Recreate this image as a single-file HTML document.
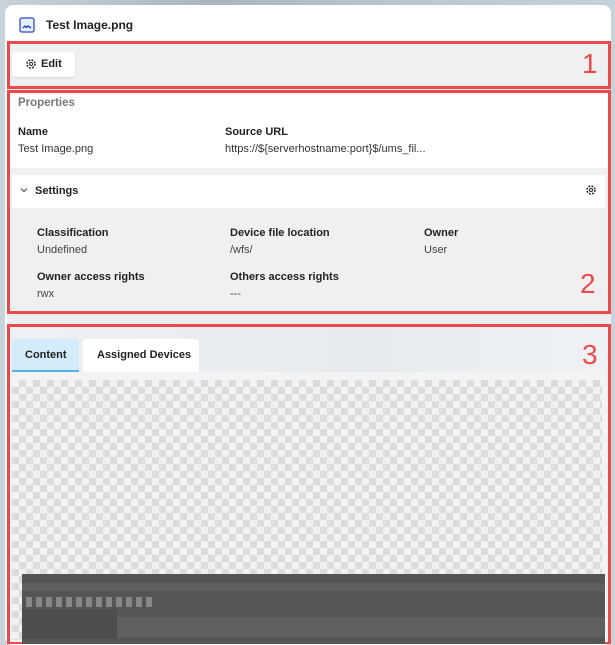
<!DOCTYPE html><html><head><style>
*{box-sizing:border-box;margin:0;padding:0}
body{width:615px;height:636px;overflow:hidden;background:#c9d3da;font-family:"Liberation Sans",sans-serif;position:relative;color:#222}
.a{position:absolute}
.card{left:5px;top:5px;width:606px;height:640px;background:#fff;border-radius:8px}
.rb{border:3px solid #ec4a4a}
.t{font-size:11px;white-space:nowrap}
.b{font-weight:bold;font-size:11px;color:#222;white-space:nowrap}
.num{color:#ec4a4a;font-size:28px;line-height:28px}
.chk{background-color:#f2f2f2;background-image:linear-gradient(45deg,#dcdcdc 25%,transparent 25%,transparent 75%,#dcdcdc 75%),linear-gradient(45deg,#dcdcdc 25%,transparent 25%,transparent 75%,#dcdcdc 75%);background-size:14px 14px;background-position:0 0,7px 7px}
</style></head><body>
<div class="a" style="left:0;top:0;width:615px;height:8px;background:linear-gradient(90deg,#c8d2d8 0,#a9b6bf 35%,#b8c4cc 60%,#c4d2dc 100%)"></div>
<div class="a card"></div>
<svg class="a" style="left:19px;top:17px" width="16" height="16" viewBox="0 0 16 16"><rect x="1" y="1" width="14" height="14" rx="2" fill="#e9eefc" stroke="#4a63d6" stroke-width="1.5"/><path d="M4 11l2-2 1.5 1.5L9 9l3 2" fill="none" stroke="#2d4bc8" stroke-width="1.5"/></svg>
<div class="a b" style="left:46px;top:18px;font-size:12px">Test Image.png</div>

<div class="a" style="left:7px;top:41px;width:604px;height:283px;background:#eceeef"></div>
<div class="a rb" style="left:7px;top:41px;width:604px;height:48px;background:#f0f0f0"></div>
<div class="a" style="left:12px;top:52px;width:63px;height:25px;background:#fff;border-radius:3px;box-shadow:0 1px 2px rgba(0,0,0,.1)"></div>
<svg class="a" style="left:25px;top:58px" width="12" height="12" viewBox="0 0 12 12"><circle cx="6" cy="6" r="4" fill="none" stroke="#333" stroke-width="1.6" stroke-dasharray="2 1.2"/><circle cx="6" cy="6" r="1.6" fill="none" stroke="#333" stroke-width="1.1"/></svg>
<div class="a b" style="left:41px;top:58px">Edit</div>
<div class="a num" style="left:582px;top:50px">1</div>

<div class="a rb" style="left:7px;top:90px;width:604px;height:224px;background:#f0f0f0"></div>
<div class="a" style="left:10px;top:93px;width:598px;height:75px;background:#fff"></div>
<div class="a b" style="left:18px;top:97px;color:#777;font-size:11.5px">Properties</div>
<div class="a b" style="left:18px;top:126px">Name</div>
<div class="a t" style="left:18px;top:143px;color:#333">Test Image.png</div>
<div class="a b" style="left:225px;top:126px">Source URL</div>
<div class="a t" style="left:225px;top:143px;color:#333">https://${serverhostname:port}$/ums_fil...</div>
<div class="a" style="left:12px;top:175px;width:593px;height:33px;background:#fff"></div>
<svg class="a" style="left:20px;top:187px" width="8" height="6" viewBox="0 0 8 6"><path d="M1 1.5l3 3 3-3" fill="none" stroke="#555" stroke-width="1.2"/></svg>
<div class="a b" style="left:35px;top:185px">Settings</div>
<svg class="a" style="left:585px;top:184px" width="12" height="12" viewBox="0 0 12 12"><circle cx="6" cy="6" r="4" fill="none" stroke="#333" stroke-width="1.6" stroke-dasharray="2 1.2"/><circle cx="6" cy="6" r="1.6" fill="none" stroke="#333" stroke-width="1.1"/></svg>
<div class="a b" style="left:37px;top:227px">Classification</div>
<div class="a t" style="left:37px;top:244px;color:#444">Undefined</div>
<div class="a b" style="left:230px;top:227px">Device file location</div>
<div class="a t" style="left:230px;top:244px;color:#444">/wfs/</div>
<div class="a b" style="left:424px;top:227px">Owner</div>
<div class="a t" style="left:424px;top:244px;color:#444">User</div>
<div class="a b" style="left:37px;top:271px">Owner access rights</div>
<div class="a t" style="left:37px;top:288px;color:#444">rwx</div>
<div class="a b" style="left:230px;top:271px">Others access rights</div>
<div class="a t" style="left:230px;top:288px;color:#444">---</div>
<div class="a num" style="left:580px;top:270px">2</div>

<div class="a rb" style="left:7px;top:324px;width:604px;height:320px;background:linear-gradient(90deg,#eef1f4,#e7ecf0 60%,#eef2f5)"></div>
<div class="a" style="left:12px;top:339px;width:67px;height:33px;background:#d3ecfb;border-bottom:2px solid #5ab0e0;border-radius:3px 3px 0 0"></div>
<div class="a b" style="left:25px;top:349px">Content</div>
<div class="a" style="left:83px;top:339px;width:116px;height:33px;background:#fff;border-radius:3px 3px 0 0"></div>
<div class="a b" style="left:97px;top:349px">Assigned Devices</div>
<div class="a num" style="left:582px;top:341px">3</div>
<div class="a" style="left:10px;top:372px;width:598px;height:270px;background:#f3f3f3"></div>
<div class="a chk" style="left:12px;top:380px;width:590px;height:260px"></div>
<div class="a" style="left:22px;top:574px;width:583px;height:70px;background:#555"></div>
<div class="a" style="left:22px;top:583px;width:583px;height:8px;background:#5e5e5e"></div>
<div class="a" style="left:22px;top:609px;width:95px;height:30px;background:#4d4d4d"></div>
<div class="a" style="left:117px;top:617px;width:488px;height:20px;background:#606060"></div>
<div class="a" style="left:26px;top:597px;width:130px;height:10px;background:repeating-linear-gradient(90deg,#888 0 6px,transparent 6px 10px)"></div>
</body></html>
